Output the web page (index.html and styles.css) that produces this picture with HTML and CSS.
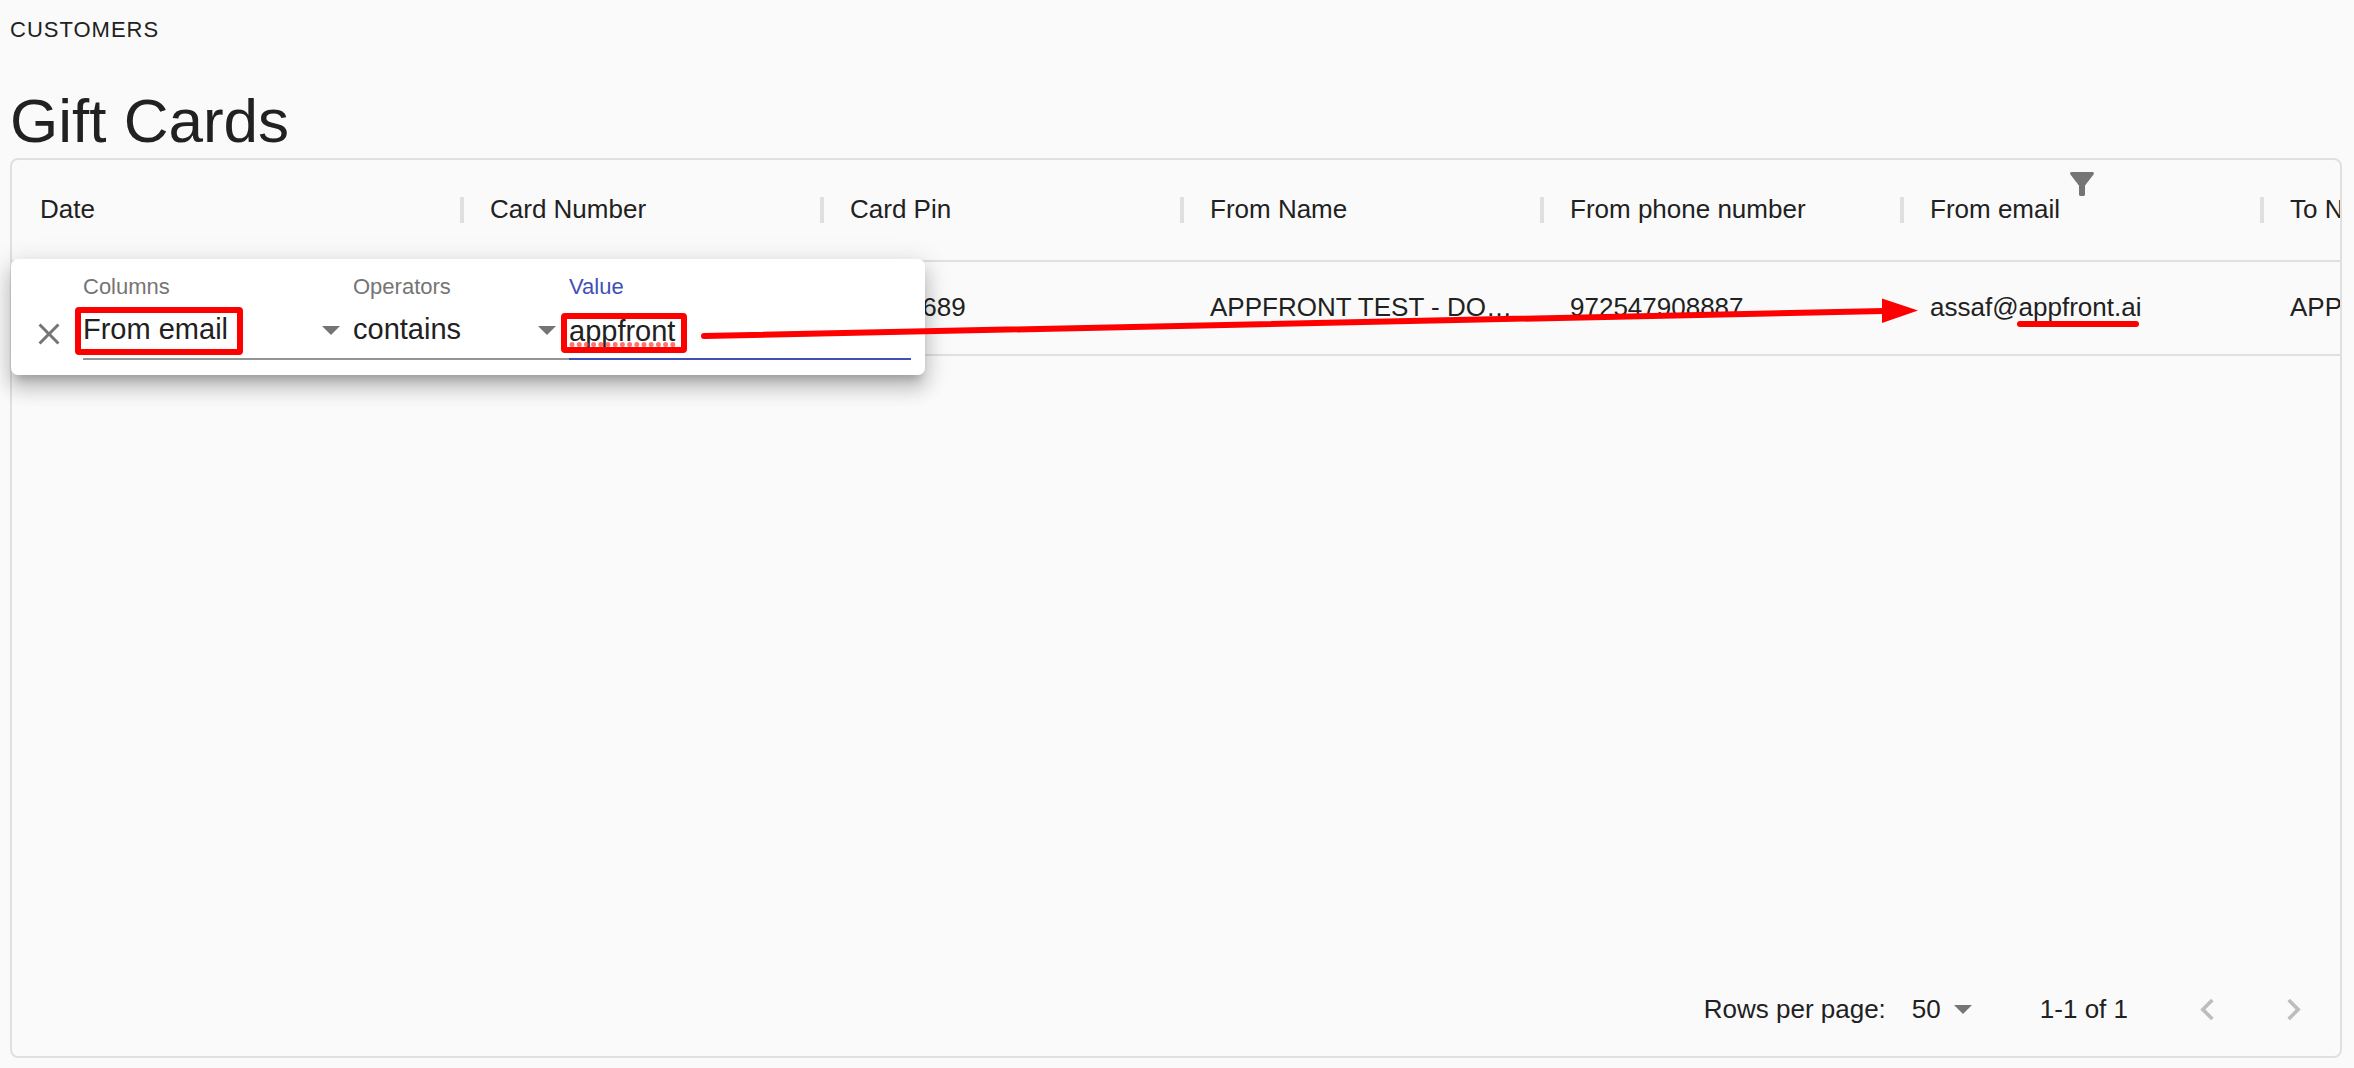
FILE: index.html
```html
<!DOCTYPE html>
<html lang="en">
<head>
  <meta charset="UTF-8">
  <meta name="viewport" content="width=device-width, initial-scale=1.0">
  <title>Gift Cards</title>
  <link rel="stylesheet" href="styles.css">
</head>
<body>
  <p class="overline">Customers</p>
  <h1>Gift Cards</h1>

  <main class="grid">
    <div class="grid-scroll">
      <table>
        <colgroup>
          <col class="col-date">
          <col><col><col><col><col><col>
        </colgroup>
        <thead>
          <tr>
            <th>Date</th>
            <th>Card Number</th>
            <th>Card Pin</th>
            <th>From Name</th>
            <th>From phone number</th>
            <th>From email
              <button type="button" class="filter-btn" aria-label="Show filters">
                <svg viewBox="0 0 24 24"><path d="M4.25 5.61C6.27 8.2 10 13 10 13v6c0 .55.45 1 1 1h2c.55 0 1-.45 1-1v-6s3.72-4.8 5.74-7.39c.51-.66.04-1.61-.79-1.61H5.04c-.83 0-1.3.95-.79 1.61z"/></svg>
              </button>
            </th>
            <th>To Name</th>
          </tr>
        </thead>
        <tbody>
          <tr>
            <td></td>
            <td></td>
            <td>00000689</td>
            <td>APPFRONT TEST - DO…</td>
            <td>972547908887</td>
            <td>assaf@appfront.ai</td>
            <td>APPFRONT</td>
          </tr>
        </tbody>
      </table>
    </div>

    <form class="filter-panel">
      <button type="button" class="close-btn" aria-label="Delete">
        <svg viewBox="0 0 24 24"><path d="M19 6.41L17.59 5 12 10.59 6.41 5 5 6.41 10.59 12 5 17.59 6.41 19 12 13.41 17.59 19 19 17.59 13.41 12z"/></svg>
      </button>
      <div class="field field-columns">
        <label for="columns">Columns</label>
        <div class="select">
          <select id="columns"><option>From email</option></select>
          <svg class="arrow" viewBox="0 0 10 5"><path d="M0 0l5 5 5-5z"/></svg>
        </div>
      </div>
      <div class="field field-operators">
        <label for="operators">Operators</label>
        <div class="select">
          <select id="operators"><option>contains</option></select>
          <svg class="arrow" viewBox="0 0 10 5"><path d="M0 0l5 5 5-5z"/></svg>
        </div>
      </div>
      <div class="field field-value">
        <label for="value">Value</label>
        <input id="value" type="text" value="appfront" spellcheck="false">
      </div>
    </form>

    <footer class="grid-footer">
      <label for="page-size">Rows per page:</label>
      <div class="select page-size">
        <select id="page-size"><option>50</option></select>
        <svg class="arrow" viewBox="0 0 10 5"><path d="M0 0l5 5 5-5z"/></svg>
      </div>
      <span class="range">1-1 of 1</span>
      <button type="button" class="page-btn" disabled aria-label="Previous page">
        <svg viewBox="0 0 24 24"><path d="M15.41 16.59L10.83 12l4.58-4.59L14 6l-6 6 6 6z"/></svg>
      </button>
      <button type="button" class="page-btn" disabled aria-label="Next page">
        <svg viewBox="0 0 24 24"><path d="M8.59 16.59L13.17 12 8.59 7.41 10 6l6 6-6 6z"/></svg>
      </button>
    </footer>
  </main>

  <!-- red marks drawn over the page -->
  <svg class="marks" width="2200" height="400" aria-hidden="true">
    <path class="spelling" d="M572 344.500H676"/>
    <rect x="78" y="310" width="162" height="42" rx="1"/>
    <rect x="564" y="316" width="120" height="34" rx="1"/>
    <path d="M704 336L1884 311"/>
    <path d="M2020 324H2136"/>
    <path class="head" d="M1882 298.500L1918 310.500L1882 323z"/>
  </svg>
</body>
</html>
```

FILE: styles.css
```css
* {
  box-sizing: border-box;
}

body {
  position: relative;
  display: flex;
  flex-direction: column;
  min-height: 100vh;
  margin: 0;
  padding: 0 12px 10px 10px;
  background-color: #fafafa;
  color: #212121;
  font-family: "Liberation Sans", Arial, sans-serif;
  font-size: 26px;
}

button,
select,
input {
  margin: 0;
  padding: 0;
  border: none;
  background: none;
  color: inherit;
  font: inherit;
}

button {
  display: flex;
  align-items: center;
  justify-content: center;
  cursor: pointer;
}

svg {
  display: block;
  fill: currentColor;
}

.overline {
  margin: 0 0 24px;
  font-size: 22px;
  line-height: 60px;
  letter-spacing: 1px;
  text-transform: uppercase;
}

h1 {
  margin: 0;
  font-size: 62px;
  font-weight: 400;
  line-height: 74px;
}

/* data grid */
.grid {
  position: relative;
  display: flex;
  flex: 1;
  flex-direction: column;
  border: 2px solid #e0e0e0;
  border-radius: 8px;
}

.grid-scroll {
  flex: 1;
  overflow: hidden;
}

table {
  width: 2610px;
  table-layout: fixed;
  border-collapse: separate;
  border-spacing: 0;
}

.col-date {
  width: 450px;
}

th,
td {
  position: relative;
  padding: 0 24px 2px 28px;
  border-bottom: 2px solid #e0e0e0;
  font-weight: 400;
  text-align: left;
  white-space: nowrap;
}

th {
  height: 102px;
}

td {
  height: 94px;
}

/* column separator */
th::after {
  content: "";
  position: absolute;
  top: 37px;
  right: -2px;
  width: 4px;
  height: 26px;
  background-color: #e0e0e0;
}

.filter-btn {
  position: absolute;
  top: 6px;
  left: 50%;
  width: 36px;
  margin-left: -18px;
  color: #757575;
}

.filter-btn svg,
.close-btn svg {
  width: 36px;
  height: 36px;
}

/* filter panel */
.filter-panel {
  position: absolute;
  top: 99px;
  left: -1px;
  z-index: 1;
  display: flex;
  width: 914px;
  padding: 15px 14px 15px 16px;
  border-radius: 7px;
  background-color: #fff;
  box-shadow: 0 9px 9px -5px rgba(0, 0, 0, 0.2),
    0 14px 18px 2px rgba(0, 0, 0, 0.14),
    0 5px 25px 4px rgba(0, 0, 0, 0.12);
}

.close-btn {
  align-self: flex-end;
  width: 44px;
  height: 52px;
  margin-right: 12px;
  color: #757575;
}

.field {
  display: flex;
  flex-direction: column;
  font-size: 29px;
}

.field label {
  color: #757575;
  font-size: 22px;
  line-height: 26px;
}

.field-columns {
  flex: 270;
}

.field-operators {
  flex: 216;
}

.field-value {
  flex: 342;
}

.field-value label {
  color: #3f51b5;
}

.select {
  position: relative;
  display: flex;
  align-items: center;
}

.select select {
  width: 100%;
  appearance: none;
  outline: none;
  cursor: pointer;
}

.field select,
.field input {
  width: 100%;
  height: 60px;
  border-bottom: 2px solid #949494;
  outline: none;
}

.field input {
  padding-top: 4px;
  border-bottom-color: #3f51b5;
}

.arrow {
  position: absolute;
  right: 13px;
  width: 18px;
  height: 9px;
  color: #757575;
  pointer-events: none;
}

/* footer */
.grid-footer {
  display: flex;
  align-items: center;
  justify-content: flex-end;
  height: 94px;
  padding-right: 4px;
}

.page-size {
  width: 76px;
  margin-left: 26px;
}

.page-size .arrow {
  right: 16px;
}

.range {
  margin: 0 36px 0 52px;
}

.page-btn {
  width: 86px;
  height: 86px;
  color: #bdbdbd;
}

.page-btn svg {
  width: 43px;
  height: 43px;
}

/* marks */
.marks {
  position: absolute;
  top: 0;
  left: 0;
  z-index: 2;
  fill: none;
  stroke: #f00;
  stroke-width: 6;
  stroke-linecap: round;
  pointer-events: none;
}

.marks .head {
  fill: #f00;
  stroke: none;
}

.marks .spelling {
  stroke: #ff3b30;
  stroke-width: 5;
  stroke-dasharray: 0 7.2;
  opacity: 0.7;
}
```
